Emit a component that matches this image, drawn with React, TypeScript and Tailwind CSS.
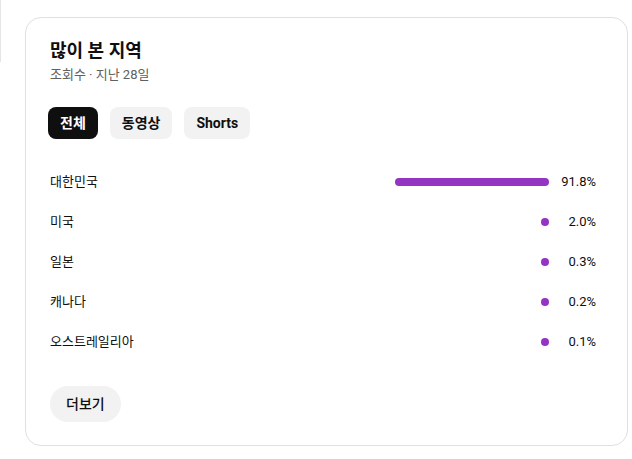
import React from "react";

const rows = [
  { name: "대한민국", pct: "91.8%", w: 154 },
  { name: "미국", pct: "2.0%", w: 8 },
  { name: "일본", pct: "0.3%", w: 8 },
  { name: "캐나다", pct: "0.2%", w: 8 },
  { name: "오스트레일리아", pct: "0.1%", w: 8 },
];

export default function App() {
  return (
    <div
      className="relative w-[632px] h-[459px] bg-white text-[#0f0f0f]"
      style={{ fontFamily: 'Roboto, "Noto Sans CJK KR", sans-serif' }}
    >
      <div className="absolute left-0 top-0 w-px h-[62px] bg-[#e5e5e5]" />
      <div className="absolute left-[25px] top-[17px] w-[603px] h-[429px] rounded-[16px] border border-[#e0e0e0] pl-[24px] pr-[31px] pt-[20px] flex flex-col">
        <div className="text-[18px] leading-[26px] font-bold">많이 본 지역</div>
        <div className="text-[13px] leading-[18px] text-[#606060] mt-[2px]">조회수 · 지난 28일</div>
        <div className="flex gap-[12px] mt-[23px] -ml-[2px]">
          <div className="h-[32px] px-[12px] rounded-[8px] bg-[#0f0f0f] text-white text-[14px] font-bold flex items-center">전체</div>
          <div className="h-[32px] px-[12px] rounded-[8px] bg-[#f2f2f2] text-[14px] font-bold flex items-center">동영상</div>
          <div className="h-[32px] px-[12px] rounded-[8px] bg-[#f2f2f2] text-[14px] font-bold flex items-center">Shorts</div>
        </div>
        <div className="flex flex-col mt-[23px]">
          {rows.map((r) => (
            <div key={r.name} className="h-[40px] flex items-center">
              <div className="text-[13px] flex-1">{r.name}</div>
              <div className="h-[8px] rounded-full bg-[#9334c2]" style={{ width: r.w }} />
              <div className="w-[47px] text-right text-[13px]">{r.pct}</div>
            </div>
          ))}
        </div>
        <div className="mt-[24px]">
          <div className="inline-flex h-[36px] px-[16px] items-center rounded-full bg-[#f2f2f2] text-[14px] font-medium">더보기</div>
        </div>
      </div>
    </div>
  );
}
